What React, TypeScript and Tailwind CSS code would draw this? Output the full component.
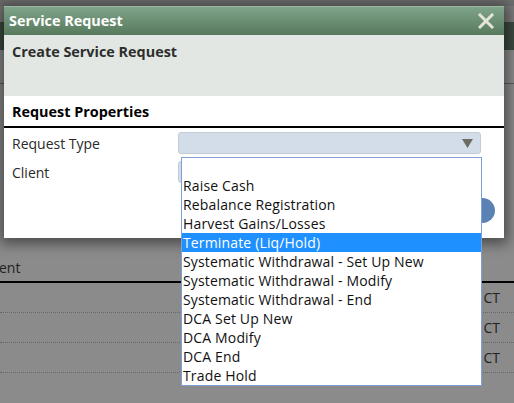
export default function App() {
  const items = [
    "",
    "Raise Cash",
    "Rebalance Registration",
    "Harvest Gains/Losses",
    "Terminate (Liq/Hold)",
    "Systematic Withdrawal - Set Up New",
    "Systematic Withdrawal - Modify",
    "Systematic Withdrawal - End",
    "DCA Set Up New",
    "DCA Modify",
    "DCA End",
    "Trade Hold",
  ];
  return (
    <div className="relative w-[514px] h-[403px] overflow-hidden bg-[#8b8b8b] font-['Open_Sans',sans-serif]">
      {/* underlying page (dimmed) */}
      <div className="flex flex-col">
        <div className="h-[6px] bg-[#6f6f6f]" />
        <div className="h-[16px] bg-[#7b7b7b]" />
        <div className="h-[28px] bg-[#3c4a40]" />
        <div className="h-[34px] border-b border-[#5a5a5a]" />
        <div className="h-[170px]" />
        <div className="h-[27px] flex items-center text-[14px] text-[#222] -ml-[1px]">ent</div>
        <div className="border-b-2 border-black" />
        {["CT", "CT", "CT"].map((t, i) => (
          <div key={i} className="h-[30px] flex items-center justify-end pr-[14px] border-b border-dotted border-[#666] text-[14px] text-[#222]">
            {t}
          </div>
        ))}
      </div>

      {/* modal */}
      <div className="absolute left-[4px] top-[6px] w-[500px] h-[232px] bg-white flex flex-col shadow-[0_2px_12px_4px_rgba(0,0,0,0.45)]">
        <div className="h-[29px] flex items-center justify-between px-[5px] bg-gradient-to-b from-[#80a489] to-[#577a5e] border-t border-[#9bb9a2]">
          <span className="text-white font-bold text-[14.4px]">Service Request</span>
          <svg width="16" height="16" viewBox="0 0 16 16" className="mr-[5px]">
            <path d="M2 2 L14 14 M14 2 L2 14" stroke="#e4e4da" strokeWidth="3" strokeLinecap="square" />
          </svg>
        </div>
        <div className="h-[61px] bg-[#e2e7e3] px-[8px] pt-[4px]">
          <span className="font-bold text-[14.4px] text-[#2e2e2e]">Create Service Request</span>
        </div>
        <div className="relative flex-1 flex flex-col">
          <div className="h-[32px] flex items-center px-[8px] border-b-2 border-black pt-[2px]">
            <span className="font-bold text-[14.4px] text-black">Request Properties</span>
          </div>
          <div className="flex items-center h-[28px] pl-[8px] mt-[1px]">
            <span className="w-[166px] text-[14px] text-[#2a2a2a]">Request Type</span>
            <div className="w-[303px] h-[22px] bg-[#d3dde9] border border-[#c2cbd6] rounded-[3px] flex items-center justify-end pr-[7px]">
              <svg width="11" height="9" viewBox="0 0 11 9">
                <path d="M0 0 H11 L5.5 9 Z" fill="#6c6c62" />
              </svg>
            </div>
          </div>
          <div className="flex items-center h-[30px] pl-[8px]">
            <span className="w-[166px] text-[14px] text-[#2a2a2a]">Client</span>
            <div className="w-[303px] h-[22px] bg-[#d3dde9] border border-[#c2cbd6] rounded-[3px]" />
          </div>
          <div className="absolute left-[466px] top-[102px] w-[25px] h-[25px] rounded-full bg-[#5b82b4]" />
        </div>
      </div>

      {/* dropdown list */}
      <div className="absolute left-[181px] top-[157px] w-[301px] bg-white border border-[#7f9fd6] flex flex-col">
        {items.map((it, i) => (
          <div
            key={i}
            className={
              (i === 0 ? "h-[18px] " : "h-[19px] leading-[19px] ") +
              "pl-[1px] text-[14px] tracking-[0.15px] whitespace-nowrap " +
              (i === 4 ? "bg-[#1e90ff] text-white" : "text-[#111]")
            }
          >
            {it}
          </div>
        ))}
      </div>
    </div>
  );
}
